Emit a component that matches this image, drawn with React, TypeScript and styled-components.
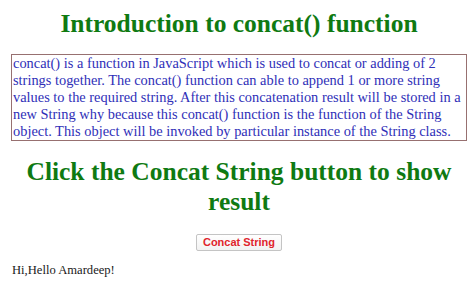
import React, { useState } from 'react'
import styled, { createGlobalStyle } from 'styled-components'

const GlobalStyle = createGlobalStyle`
  body {
    margin: 8px 7px 8px 11px;
    background: #fff;
    font-family: "Liberation Serif", "Times New Roman", serif;
  }
`

const Title = styled.h1`
  margin: 2px 0 16px;
  text-align: center;
  color: #0f7a12;
  font-size: 25.5px;
  line-height: 28px;
  font-weight: bold;
`

const Intro = styled.p`
  margin: 0;
  padding: 0 1px;
  border: 1px solid #977070;
  color: #2f2fb8;
  font-size: 14.4px;
  line-height: 17px;
`

const Prompt = styled.h2`
  margin: 16px 0 17px;
  text-align: center;
  color: #0f7a12;
  font-size: 25.5px;
  line-height: 30px;
  font-weight: bold;
`

const Actions = styled.div`
  display: flex;
  justify-content: center;
`

const ConcatButton = styled.button`
  height: 17px;
  padding: 0 6px;
  border: 1px solid #c4c4c4;
  border-radius: 2px;
  background: linear-gradient(#ffffff, #f2f2f2);
  color: #e0242c;
  font-family: "Liberation Sans", Arial, sans-serif;
  font-size: 11px;
  font-weight: bold;
  line-height: 15px;
  cursor: pointer;
`

const Result = styled.p`
  margin: 12px 0 0 1px;
  color: #1a1a1a;
  font-size: 12.6px;
`

export default function App() {
  const [result, setResult] = useState('Hi,Hello Amardeep!')
  return (
    <>
      <GlobalStyle />
      <Title>Introduction to concat() function</Title>
      <Intro>
        concat() is a function in JavaScript which is used to concat or adding of 2
        strings together. The concat() function can able to append 1 or more string
        values to the required string. After this concatenation result will be stored in a
        new String why because this concat() function is the function of the String
        object. This object will be invoked by particular instance of the String class.
      </Intro>
      <Prompt>Click the Concat String button to show result</Prompt>
      <Actions>
        <ConcatButton onClick={() => setResult('Hi,'.concat('Hello ', 'Amardeep!'))}>
          Concat String
        </ConcatButton>
      </Actions>
      <Result>{result}</Result>
    </>
  )
}
